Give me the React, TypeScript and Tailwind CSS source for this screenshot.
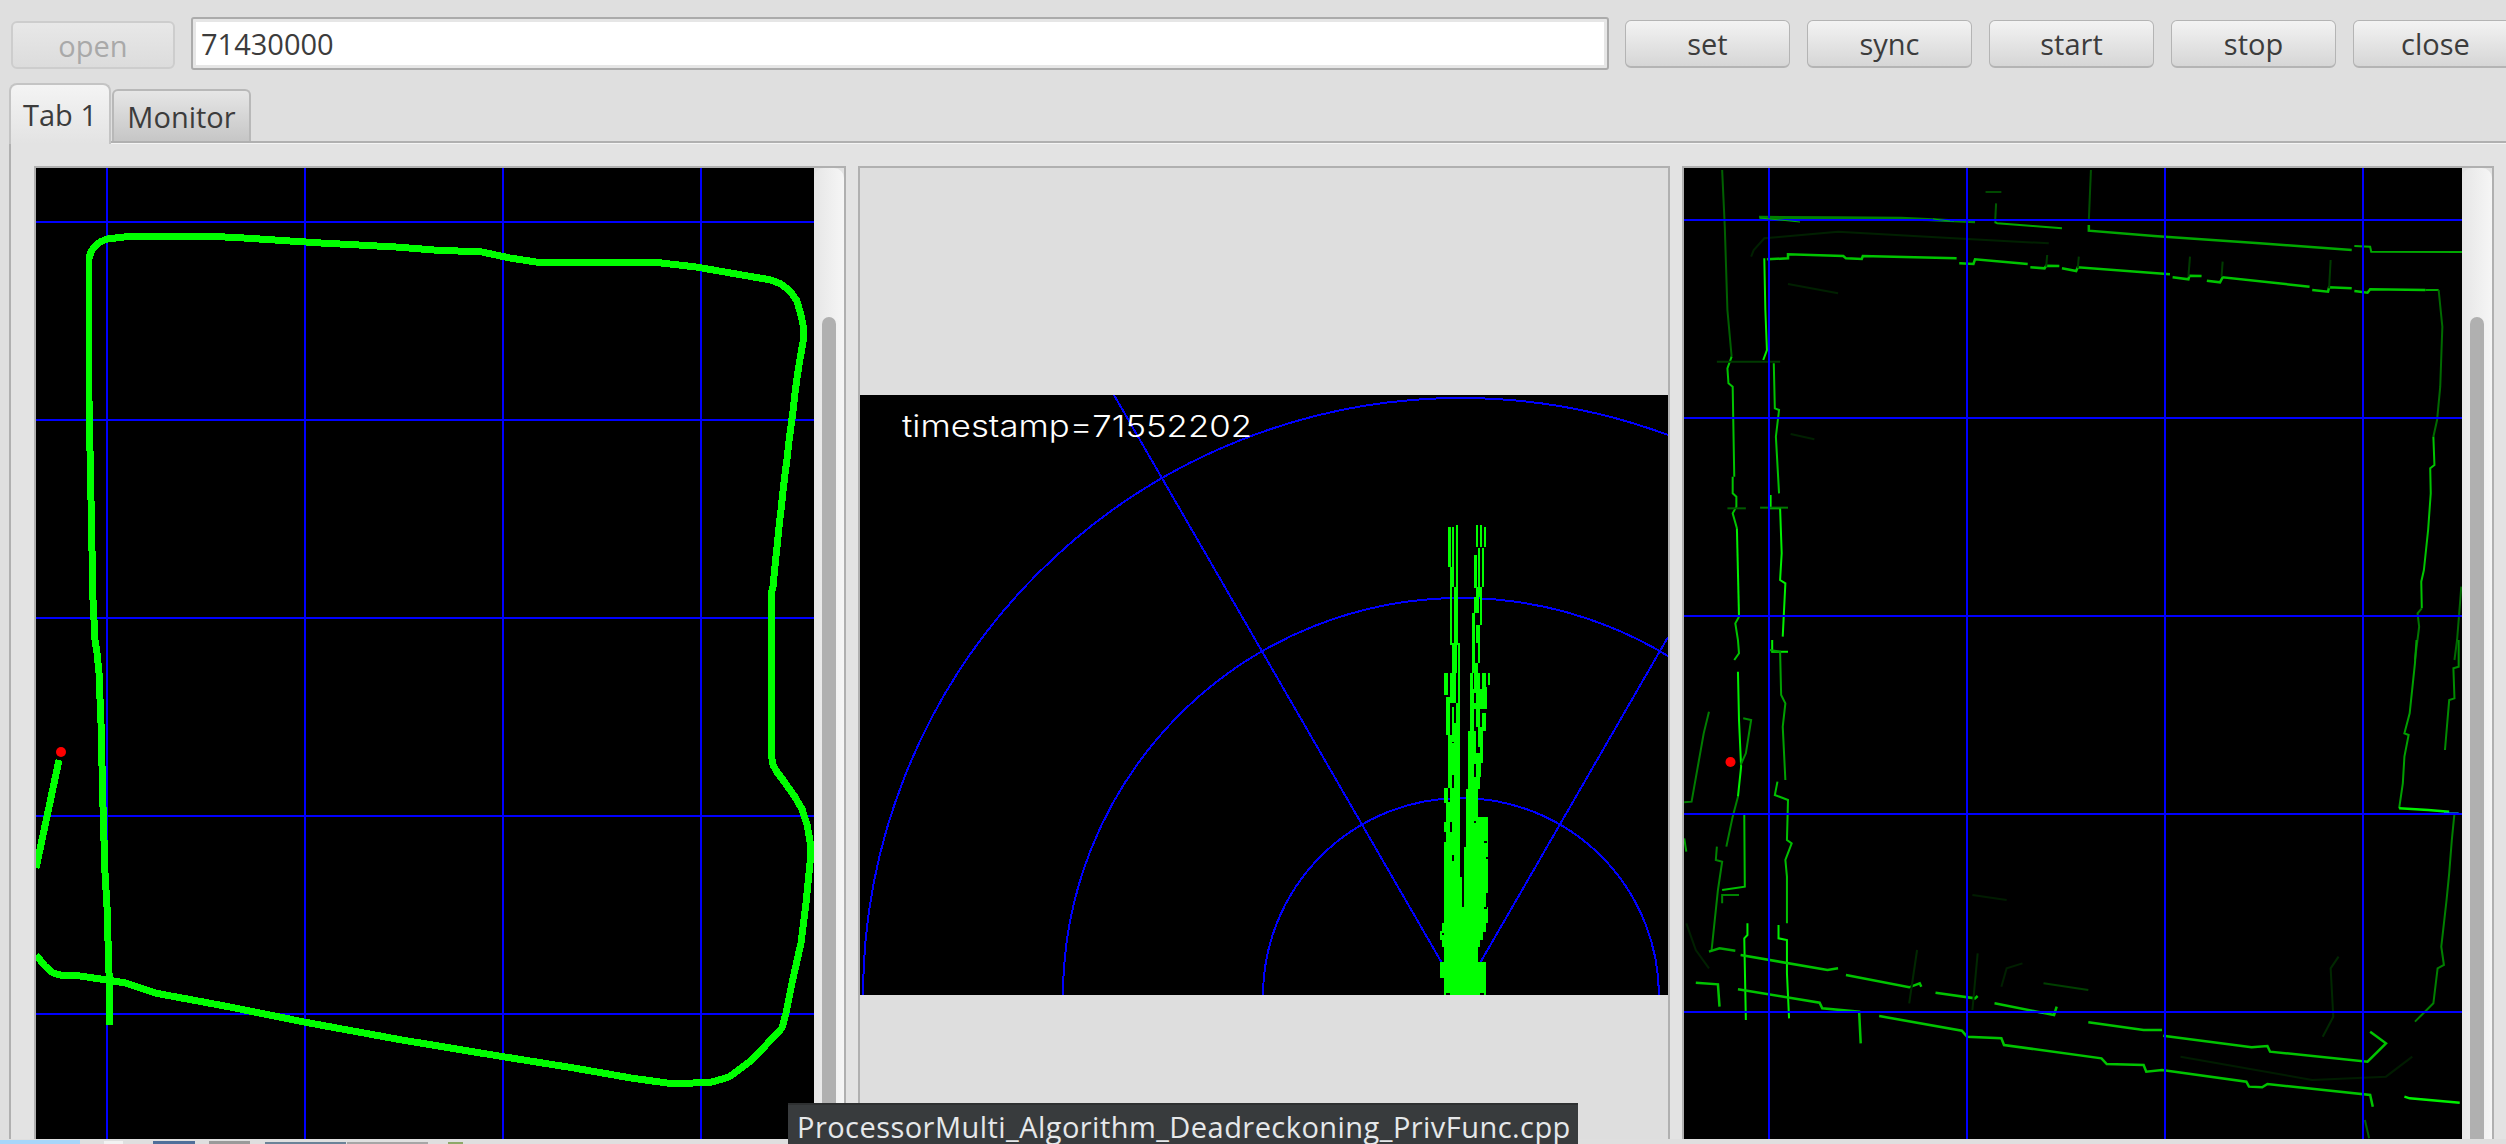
import React from "react";

const GREEN = "#00ff00";
const BLUE = "#0000ff";

const track: [number, number][] = [
  [93, 600], [91, 500], [89, 400], [89, 258], [91, 252], [94, 247], [100, 242], [107, 239], [124, 237], [142, 236], [206, 236], [244, 238], [321, 243], [396, 247], [434, 250],
  [482, 252], [510, 258], [536, 262], [653, 262], [696, 267], [771, 280], [781, 284], [790, 291], [797, 301], [801, 315], [804, 330], [803, 342],
  [799, 365], [797, 378], [795, 393], [793, 411], [791, 426], [789, 441], [787, 459], [785, 474], [783, 491], [781, 510],
  [779, 527], [777, 547], [775, 566], [773, 587], [771, 594], [771, 753], [773, 765], [777, 772], [783, 780], [795, 797],
  [802, 809], [807, 824], [811, 847], [810, 863], [806, 903], [801, 943], [792, 983], [786, 1013], [782, 1028], [752, 1060],
  [729, 1077], [712, 1082], [674, 1084], [631, 1078], [574, 1068], [505, 1057], [402, 1040], [304, 1022], [230, 1007],
  [155, 993], [126, 983], [107, 980], [80, 976], [60, 975], [53, 973], [45, 966], [36, 955],
];
const leg: [number, number][] = [
  [93, 600], [95, 640], [97, 653], [99, 673], [101, 723], [103, 807], [105, 873], [107, 907], [109, 973], [109, 1025],
];
const pts = (a: [number, number][]) => a.map((p) => p.join(",")).join(" ");

const blob: [number, number, number, number][] = [
  [624, 82, 8, 120], [636, 82, 6, 180], [648, 75, 6, 190], [630, 200, 12, 62], [630, 262, 6, 172], [642, 262, 12, 172],
  [636, 430, 14, 90], [654, 430, 6, 180], [612, 520, 12, 65], [630, 520, 18, 90], [618, 590, 12, 115], [636, 622, 6, 105],
  [648, 610, 12, 60], [624, 705, 12, 30], [642, 670, 18, 60], [624, 730, 36, 95], [642, 820, 18, 50], [624, 825, 12, 40],
  [612, 865, 12, 45], [630, 865, 30, 45], [618, 905, 42, 60], [612, 965, 18, 30], [636, 945, 24, 80], [618, 995, 42, 35],
  [612, 1025, 48, 105], [612, 1130, 54, 90],
  [708, 75, 6, 65], [720, 75, 6, 65], [732, 82, 6, 60], [714, 145, 6, 120], [702, 165, 8, 100], [726, 145, 6, 115],
  [708, 262, 18, 30], [702, 292, 14, 48], [720, 292, 6, 82], [696, 340, 8, 90], [708, 375, 12, 55], [696, 430, 8, 60],
  [714, 430, 6, 60], [696, 490, 18, 30], [690, 520, 8, 48], [702, 520, 18, 60], [726, 520, 12, 50], [744, 520, 6, 36],
  [690, 568, 12, 125], [708, 580, 12, 100], [720, 568, 12, 60], [702, 610, 30, 18], [732, 560, 10, 68], [726, 640, 12, 54],
  [684, 692, 24, 100], [714, 680, 16, 60], [720, 725, 10, 35], [684, 760, 44, 30], [684, 790, 18, 40], [708, 790, 16, 40],
  [684, 830, 36, 36], [678, 866, 36, 85], [678, 950, 66, 92], [672, 1040, 72, 140], [672, 1180, 66, 40],
  [612, 1220, 132, 50], [606, 1270, 132, 25], [600, 1292, 130, 28], [606, 1320, 114, 20], [612, 1340, 102, 45],
  [600, 1385, 138, 48], [612, 1433, 126, 52],
];
const holes: [number, number, number, number][] = [
  [702, 963, 6, 6], [732, 1023, 8, 6], [636, 1065, 6, 18], [606, 1298, 6, 6], [732, 1220, 8, 6], [618, 1478, 12, 7],
  [720, 1478, 12, 7], [738, 1072, 6, 6],
];

type Line = { c: string; w?: number; p: string };
const faint = "#003a00";
const mid = "#00a800";
const main = "#00c400";
const hi = "#00f000";

const upper: Line[] = [
  { c: "#008000", w: 3, p: "150,172 300,173 420,175 560,185" },
  { c: "#0090e8", w: 2, p: "145,180 172,180" },
  { c: "#0090e8", w: 2, p: "455,180 520,181" },
  { c: "#005a00", p: "600,130 598,190" },
  { c: mid, p: "598,186 602,190 725,205" },
  { c: "#004800", p: "580,96 610,96" },
  { c: "#005000", p: "780,30 776,180" },
  { c: mid, w: 2.5, p: "776,195 776,212 900,228 1100,250 1275,270" },
  { c: mid, p: "1280,258 1310,260 1312,275 1485,276" },
  { c: "#002000", p: "135,290 140,270 160,235 300,215 520,235 700,250" },
  { c: main, w: 2.5, p: "165,298 205,295 205,283 310,288 315,295 345,297 347,288 525,295" },
  { c: main, w: 2.5, p: "530,310 557,312 560,298 660,312" },
  { c: main, w: 2.5, p: "665,322 692,325 695,317 720,318" },
  { c: main, w: 2.5, p: "725,325 752,333 755,322 930,343" },
  { c: main, w: 2.5, p: "935,352 965,358 967,347 990,348" },
  { c: main, w: 2.5, p: "1000,362 1025,367 1030,352 1195,380" },
  { c: main, w: 2.5, p: "1200,390 1230,395 1232,382 1275,385" },
  { c: main, w: 2.5, p: "1280,393 1305,398 1310,388 1415,390" },
  { c: mid, p: "1415,390 1440,390" },
  { c: "#003c00", p: "697,285 695,320" },
  { c: "#003c00", p: "757,290 755,325" },
  { c: "#003c00", p: "968,290 965,350" },
  { c: "#003c00", p: "1030,305 1028,350" },
  { c: "#003c00", p: "1235,300 1232,385" },
  { c: "#006a00", p: "1440,390 1447,500 1443,680 1437,780 1430,830" },
  { c: main, p: "1430,830 1432,915 1424,925 1425,1000 1420,1110 1412,1230 1407,1265 1408,1345" },
  { c: "#007800", p: "1408,1345 1400,1360 1403,1400 1395,1500" },
  { c: "#006a00", p: "1483,1280 1475,1440 1470,1500" },
  { c: "#006000", p: "80,30 85,200 90,450 98,590" },
  { c: main, p: "98,590 90,625 92,670 100,680 103,950" },
  { c: main, p: "100,950 100,1000 107,1010 107,1040 100,1060 108,1105" },
  { c: hi, p: "108,1105 112,1370" },
  { c: main, p: "112,1370 105,1390 110,1440 112,1480 103,1500" },
  { c: hi, p: "160,295 162,450 165,570 158,600" },
  { c: main, p: "178,610 180,745 188,750 182,830 188,1000" },
  { c: hi, p: "172,1005 172,1045 190,1045 193,1180 190,1260 200,1270 195,1430" },
  { c: hi, p: "175,1440 175,1475 205,1475" },
  { c: faint, p: "70,605 190,605" },
  { c: "#005a00", p: "90,1045 125,1045" },
  { c: "#007a00", p: "152,1043 205,1043" },
  { c: "#002000", p: "205,372 300,400" },
  { c: "#002000", p: "210,822 255,838" },
];

const lower: Line[] = [
  { c: hi, p: "110,95 112,240 116,380 110,470" },
  { c: "#008000", p: "110,470 100,530 88,620" },
  { c: "#008c00", p: "120,235 135,240 125,340 115,375" },
  { c: "#007c00", p: "55,215 45,280 22,485 8,487" },
  { c: "#00a000", p: "170,30 190,35 192,165 200,190 195,260 200,420" },
  { c: "#00c000", p: "185,425 180,465 205,480 203,600 212,610 200,660 203,710 203,850" },
  { c: "#00c000", p: "122,525 123,740 80,750" },
  { c: "#008400", p: "70,620 68,660 80,665 72,750 60,930" },
  { c: "#008400", p: "80,790 80,765 112,765" },
  { c: hi, p: "128,850 128,885 122,895 125,1140" },
  { c: hi, p: "187,855 187,895 203,900 203,1000 207,1135" },
  { c: "#00a000", p: "8,595 12,635" },
  { c: "#00a000", p: "1398,0 1395,70 1385,220 1375,280 1383,285 1375,350 1372,430 1365,505" },
  { c: hi, w: 2.5, p: "1365,505 1420,510 1460,515" },
  { c: "#0090e8", p: "1450,520 1478,520" },
  { c: "#008c00", p: "1478,0 1478,80 1468,85 1470,175 1460,180 1452,330" },
  { c: "#008000", p: "1470,520 1465,600 1460,700 1455,780 1450,850 1445,920 1450,975 1438,985 1430,1090 1395,1145" },
  { c: mid, w: 2.5, p: "55,935 75,925 105,932" },
  { c: main, w: 2.5, p: "115,945 280,990 300,985" },
  { c: main, w: 2.5, p: "315,1005 435,1042 455,1030 458,1040" },
  { c: main, w: 2.5, p: "485,1058 560,1075 565,1068" },
  { c: main, w: 2.5, p: "597,1090 710,1125 715,1100" },
  { c: "#0090e8", w: 2, p: "665,1114 690,1118" },
  { c: main, w: 2.5, p: "775,1147 880,1170 915,1170" },
  { c: main, w: 2.5, p: "917,1187 1085,1222 1115,1218 1120,1235 1305,1265 1340,1210 1310,1175" },
  { c: main, w: 2.5, p: "30,1028 72,1033 75,1100" },
  { c: main, w: 2.5, p: "110,1048 265,1088 270,1105 340,1115 343,1210" },
  { c: main, w: 2.5, p: "378,1128 535,1172 545,1190 610,1195 615,1215 800,1255 810,1272 880,1275 885,1295 915,1290 1075,1325 1080,1340 1105,1342 1115,1332 1310,1365 1315,1400" },
  { c: hi, w: 2.5, p: "1375,1370 1385,1375 1480,1388" },
  { c: "#002800", p: "450,930 435,1090" },
  { c: "#002800", p: "565,940 555,1110" },
  { c: "#002000", p: "650,970 620,985 610,1040" },
  { c: "#004000", p: "690,1030 775,1050" },
  { c: "#002800", p: "1250,950 1235,985 1240,1130 1220,1190" },
  { c: "#001c00", p: "1390,1250 1340,1310 1200,1320 950,1250" },
  { c: "#001c00", p: "555,765 620,780" },
  { c: "#006000", p: "1300,1440 1308,1495" },
  { c: "#002000", p: "12,850 30,930 55,985" },
];

function ToolButton({ label, disabled }: { label: string; disabled?: boolean }) {
  return (
    <div
      className={
        disabled
          ? "flex h-[48px] w-[164px] shrink-0 items-center justify-center rounded-[6px] border-2 border-[#cdcdcd] bg-linear-to-b from-[#e8e8e8] to-[#dcdcdc] text-[#a9a9a9]"
          : "flex h-[48px] w-[165px] shrink-0 items-center justify-center rounded-[6px] border border-b-2 border-[#b4b4b4] bg-linear-to-b from-[#f3f3f3] to-[#d6d6d6] text-[#3c3c3c]"
      }
    >
      {label}
    </div>
  );
}

function Scrollbar() {
  return (
    <div className="flex w-[30px] shrink-0 rounded-t-[10px] bg-linear-to-r from-[#e6e6e6] to-[#f6f6f6] pl-[8px] pr-[8px] pt-[149px]">
      <div className="w-[14px] flex-1 rounded-t-[7px] bg-[#b0b0b0]" />
    </div>
  );
}

function Grid({ xs, ys, x0, y0, w, h }: { xs: number[]; ys: number[]; x0: number; y0: number; w: number; h: number }) {
  return (
    <g stroke={BLUE} strokeWidth={2} shapeRendering="crispEdges">
      {xs.map((x) => (
        <line key={x} x1={x} x2={x} y1={y0} y2={y0 + h} />
      ))}
      {ys.map((y) => (
        <line key={y} x1={x0} x2={x0 + w} y1={y} y2={y} />
      ))}
    </g>
  );
}

function Lines({ data, transform }: { data: Line[]; transform: string }) {
  return (
    <g transform={transform} fill="none" strokeLinejoin="miter">
      {data.map((l, i) => (
        <polyline key={i} points={l.p} stroke={l.c} strokeWidth={l.w ?? 2} vectorEffect="non-scaling-stroke" />
      ))}
    </g>
  );
}

const cell = "flex h-full w-[812px] shrink-0 border-2 border-b-0 border-[#b0b0b0]";

export default function App() {
  return (
    <div className="relative flex h-[1144px] w-[2506px] flex-col overflow-hidden bg-[#dfdfdf] font-['Open_Sans',sans-serif] text-[29px] leading-none text-[#3c3c3c]">
      <div className="flex h-[83px] shrink-0 items-start gap-[17px] pl-[11px] pt-[17px]">
        <div className="flex items-center gap-[16px]">
          <div className="pt-[3px]">
            <ToolButton label="open" disabled />
          </div>
          <div className="flex h-[53px] w-[1418px] shrink-0 items-center rounded-[3px] border-2 border-[#ababab] bg-white pl-[8px] shadow-[inset_0_0_0_3px_#e6e6e6]">
            71430000
          </div>
        </div>
        <div className="flex gap-[17px] pt-[3px] -ml-px">
          {["set", "sync", "start", "stop", "close"].map((b) => (
            <ToolButton key={b} label={b} />
          ))}
        </div>
      </div>

      <div className="relative z-10 flex h-[58px] shrink-0 items-start pl-[9px]">
        <div className="flex h-[61px] w-[102px] items-center justify-center rounded-t-[8px] border-2 border-b-0 border-[#c4c4c4] bg-linear-to-b from-[#f4f4f4] to-[#e3e3e3] pb-px">
          Tab 1
        </div>
        <div className="ml-px mt-[6px] flex h-[52px] w-[139px] items-center justify-center rounded-t-[6px] border-2 border-b-0 border-[#b8b8b8] bg-linear-to-b from-[#e6e6e6] to-[#c6c6c6]">
          Monitor
        </div>
      </div>

      <div className="ml-[9px] flex min-h-0 flex-1 flex-col border-l-2 border-t-2 border-[#b0b0b0] bg-[#e3e3e3]">
        <div className="h-px shrink-0 bg-[#f4f4f4]" />
        <div className="flex min-h-0 flex-1 gap-[12px] pl-[23px] pt-[22px]">
          <div className={cell}>
            <svg width={778} height={971} viewBox="36 168 778 971" className="block shrink-0 bg-black">
              <Grid xs={[107, 305, 503, 701]} ys={[222, 420, 618, 816, 1014]} x0={36} y0={168} w={778} h={971} />
              <g fill="none" stroke={GREEN} strokeWidth={7} strokeLinejoin="round" shapeRendering="crispEdges">
                <polyline points={pts(track)} />
                <polyline points={pts(leg)} />
                <polyline points="59,760 36,868" />
              </g>
              <circle cx={61} cy={752} r={5} fill="#ff0000" />
            </svg>
            <Scrollbar />
          </div>

          <div className={`${cell} flex-col bg-[#dedede] pt-[227px]`}>
            <svg width={808} height={600} viewBox="860 395 808 600" className="block shrink-0 bg-black">
              <g fill="none" stroke={BLUE} strokeWidth={2} shapeRendering="crispEdges">
                <circle cx={1461} cy={996} r={198} />
                <circle cx={1461} cy={996} r={398} />
                <circle cx={1461} cy={996} r={598} />
                <line x1={1461} y1={996} x2={1114} y2={395} />
                <line x1={1461} y1={996} x2={1668} y2={637} />
              </g>
              <g transform="translate(1240,500) scale(0.33333)" shapeRendering="crispEdges">
                {blob.map(([x, y, w, h], i) => (
                  <rect key={i} x={x} y={y} width={w} height={h} fill={GREEN} />
                ))}
                {holes.map(([x, y, w, h], i) => (
                  <rect key={i} x={x} y={y} width={w} height={h} fill="#000000" />
                ))}
              </g>
              <text
                x={902}
                y={437}
                fill="#ffffff"
                fontSize={30}
                fontWeight={300}
                textLength={350}
                lengthAdjust="spacingAndGlyphs"
                fontFamily="Inter, sans-serif"
              >
                timestamp=71552202
              </text>
            </svg>
          </div>

          <div className={cell}>
            <svg width={778} height={971} viewBox="1684 168 778 971" className="block shrink-0 bg-black">
              <g className="blur-[0.4px]">
                <Lines data={upper} transform="translate(1680,160) scale(0.52684,0.33333)" />
                <Lines data={lower} transform="translate(1680,640) scale(0.52684,0.33333)" />
              </g>
              <Grid xs={[1769, 1967, 2165, 2363]} ys={[220, 418, 616, 814, 1012]} x0={1684} y0={168} w={778} h={971} />
              <g fill="none" stroke="#00b400" strokeWidth={1}>
                <polyline points="1760,218 1800,222" />
                <polyline points="1933,219 1950,221" />
              </g>
              <ellipse cx={1730.5} cy={762} rx={5} ry={5} fill="#ff0000" />
            </svg>
            <Scrollbar />
          </div>
        </div>
      </div>

      <div className="flex h-[5px] shrink-0 items-end">
        <div className="h-[4px] w-[80px] bg-[#a8d6fa]" />
        <div className="ml-[24px] h-[3px] w-[19px] bg-[#f2f2f2]" />
        <div className="ml-[30px] h-[3px] w-[42px] bg-[#4f6f9a]" />
        <div className="ml-[14px] h-[3px] w-[41px] bg-[#9a9a9a]" />
        <div className="ml-[15px] h-[2px] w-[81px] bg-[#6b8398]" />
        <div className="ml-px h-[2px] w-[81px] bg-[#a6a6a6]" />
        <div className="ml-[20px] h-[2px] w-[15px] bg-[#8ea868]" />
      </div>

      <div className="absolute left-[788px] top-[1103px] h-[41px] w-[790px] border-t-2 border-[#2e3031] bg-[#383b3d] pl-[9px] pt-[7px] tracking-[0.45px] text-[#e6e8ea]">
        ProcessorMulti_Algorithm_Deadreckoning_PrivFunc.cpp
      </div>
    </div>
  );
}
